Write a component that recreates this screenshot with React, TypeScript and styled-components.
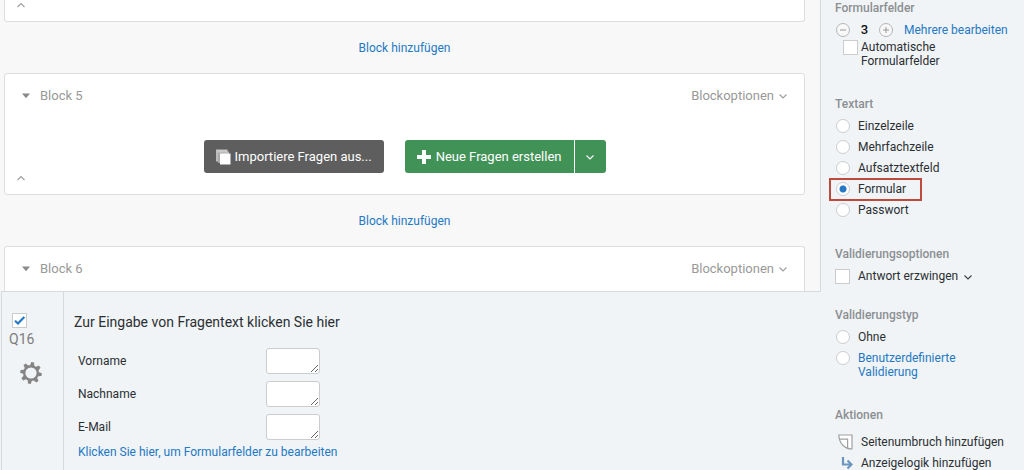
import React from "react";
import styled, { createGlobalStyle, css } from "styled-components";

const blue = "#2478c4";
const line = "#d7dadd";
const panel = "#f0f4f7";

const GlobalStyle = createGlobalStyle`
  *, *::before, *::after { box-sizing: border-box; }
  body { margin: 0; background: ${panel}; }
  body, button, input, textarea {
    font-family: Roboto, "Liberation Sans", sans-serif;
    font-size: 12px;
    line-height: 14px;
    color: #2c2f32;
  }
`;

const Shell = styled.div`
  display: flex;
  height: 100vh;
  overflow: hidden;
`;

const Editor = styled.main`
  flex: 1;
  min-width: 0;
  display: flex;
  flex-direction: column;
`;

const Canvas = styled.div`
  background: #f8f8f8;
  border-right: 1px solid ${line};
`;

const Block = styled.section<{ $cut?: "top" | "bottom" }>`
  margin: 0 15px 0 4px;
  background: #fff;
  border: 1px solid #dedede;
  border-radius: 3px;
  ${(p) => p.$cut === "top" && css`border-top: 0; border-top-left-radius: 0; border-top-right-radius: 0;`}
  ${(p) => p.$cut === "bottom" && css`border-bottom: 0; border-bottom-left-radius: 0; border-bottom-right-radius: 0;`}
`;

const BlockHeader = styled.header`
  display: flex;
  align-items: center;
  justify-content: space-between;
  height: 44px;
  padding: 0 16px;
`;

const PlainButton = styled.button`
  display: inline-flex;
  align-items: center;
  padding: 0;
  border: 0;
  background: none;
  cursor: pointer;
`;

const HeaderButton = styled(PlainButton)<{ $gap: number }>`
  gap: ${(p) => p.$gap}px;
  font-size: 13px;
  color: #999;
`;

const BlockActions = styled.div`
  display: flex;
  justify-content: center;
  gap: 21px;
  padding-top: 22px;
`;

const BlockFooter = styled.footer`
  display: flex;
  align-items: flex-start;
  height: 21px;
  padding: 0 11px;
`;

const ActionButton = styled.button<{ $tone: "grey" | "green" }>`
  display: inline-flex;
  align-items: center;
  gap: 4px;
  height: 33px;
  padding: 0 12px 0 11px;
  border: 0;
  border-radius: 3px;
  background: ${(p) => (p.$tone === "grey" ? "#5e5e5e" : "#419257")};
  color: #fff;
  font-size: 13px;
  white-space: nowrap;
  cursor: pointer;
`;

const SplitButton = styled.div`
  display: flex;
  gap: 1px;
  ${ActionButton}:first-child { border-radius: 3px 0 0 3px; }
  ${ActionButton}:last-child { padding: 0 11px 0 10px; border-radius: 0 3px 3px 0; }
`;

const AddRow = styled.div`
  display: flex;
  align-items: center;
  justify-content: center;
  height: 51px;
  padding-right: 11px;
`;

const Link = styled.a`
  color: ${blue};
  text-decoration: none;
`;

const Question = styled.section`
  flex: 1;
  display: flex;
  margin-left: 1px;
  border-top: 1px solid ${line};
  border-left: 1px solid ${line};
  background: ${panel};
`;

const QuestionRail = styled.div`
  display: flex;
  flex-direction: column;
  width: 62px;
  padding: 21px 0 0 7px;
  border-right: 1px solid ${line};
`;

const QuestionId = styled.span`
  margin-top: 3px;
  font-size: 14px;
  line-height: 16px;
  color: #7d7d7d;
`;

const GearButton = styled(PlainButton)`
  margin: 15px 0 0 11px;
`;

const QuestionBody = styled.div`
  padding: 22px 0 0 10px;
`;

const QuestionTitle = styled.h2`
  margin: 0 0 14px;
  font-size: 14px;
  line-height: 16px;
  font-weight: 400;
`;

const FieldRow = styled.div`
  display: flex;
  align-items: center;
  height: 33px;
  padding-left: 4px;
  label { width: 188px; }
`;

const FieldBox = styled.textarea`
  width: 54px;
  height: 26px;
  border: 1px solid #ccc;
  border-radius: 3px;
  background: #fff;
  overflow: hidden;
`;

const EditFields = styled.div`
  padding: 2px 0 0 4px;
`;

const Sidebar = styled.aside`
  flex: none;
  width: 203px;
  padding-left: 14px;
  background: ${panel};
`;

const Group = styled.section<{ $after: number }>`
  display: flex;
  flex-direction: column;
  align-items: flex-start;
  margin-bottom: ${(p) => p.$after}px;
`;

const GroupTitle = styled.h3`
  margin: 0 0 4px;
  font-size: 12px;
  line-height: 16px;
  font-weight: 500;
  color: #8c8f92;
`;

const Option = styled.label<{ $marked?: boolean }>`
  position: relative;
  display: inline-flex;
  align-items: flex-start;
  gap: 8px;
  padding: 3px 0 4px;
  ${(p) => p.$marked && css`
    &::after {
      content: "";
      position: absolute;
      inset: -1px -16px -1px -6px;
      border: 2px solid #bd4a3a;
    }
  `}
`;

const NestedOption = styled(Option)`
  gap: 3px;
  padding: 0 0 0 8px;
`;

const Radio = styled.input.attrs({ type: "radio" })`
  appearance: none;
  flex: none;
  width: 14px;
  height: 14px;
  margin: 0 0 0 1px;
  border: 1px solid #ccc;
  border-radius: 50%;
  background: #fff;
  &:checked { background: radial-gradient(circle, ${blue} 3px, #fff 4px); }
`;

const Tick = styled.input.attrs({ type: "checkbox" })`
  appearance: none;
  flex: none;
  width: 15px;
  height: 15px;
  margin: 0;
  border: 1px solid #ccc;
  background: #fff;
`;

const TickWrap = styled.span`
  position: relative;
  display: flex;
  width: 15px;
  margin-left: 3px;
  svg { position: absolute; left: 1px; top: 1px; pointer-events: none; }
`;

const InlineRow = styled.div`
  display: flex;
  align-items: center;
  gap: 5px;
`;

const Counter = styled.div`
  display: flex;
  align-items: center;
  height: 20px;
  padding-left: 1px;
  output {
    width: 29px;
    text-align: center;
    font-size: 13px;
    font-weight: 500;
    color: #111;
  }
  a { margin-left: 11px; }
`;

const RoundButton = styled(PlainButton)`
  justify-content: center;
  width: 14px;
  height: 14px;
  border: 1px solid #b5b5b5;
  border-radius: 50%;
  background: #f8f8f8;
`;

const ActionList = styled.div`
  display: flex;
  flex-direction: column;
  align-items: flex-start;
  padding-top: 4px;
`;

const SideAction = styled(PlainButton)`
  gap: 8px;
  height: 21px;
  padding-left: 3px;
`;

const Chevron = ({ up = false, color }: { up?: boolean; color: string }) => (
  <svg width="10" height="10" viewBox="0 0 10 10" fill="none" stroke={color} strokeWidth="1.2">
    <path d={up ? "M1.5 7 5 3.5 8.5 7" : "M1.5 3.5 5 7 8.5 3.5"} />
  </svg>
);

const Triangle = () => (
  <svg width="10" height="6" viewBox="0 0 10 6"><path d="M1 0.5H9L5 5.2Z" fill="#8a8a8a" /></svg>
);

const StackIcon = () => (
  <svg width="16" height="16" viewBox="0 0 16 16">
    <path d="M1 1H12.5V3H3V12.5H1Z" fill="#bdbdbd" />
    <path d="M3 3H14V5H5V14H3Z" fill="#a9a9a9" />
    <path d="M1 1H12.5M3 3H14" stroke="#dcdcdc" strokeWidth=".8" />
    <path d="M5 4.5H15.5V15.5H5Z" fill="#fff" />
  </svg>
);

const PlusIcon = () => (
  <svg width="16" height="16" viewBox="0 0 16 16">
    <path d="M6 1H10V6H15V10H10V15H6V10H1V6H6Z" fill="#fff" />
  </svg>
);

const GearIcon = () => (
  <svg width="22" height="22" viewBox="-11 -11 22 22" fill="#858585">
    <circle r="6.8" fill="none" stroke="#858585" strokeWidth="2.4" />
    {[9, 54, 99, 144, 189, 234, 279, 324].map((a) => (
      <path key={a} d="M-2.2 -7L-1.4 -10.8H1.4L2.2 -7Z" transform={`rotate(${a})`} />
    ))}
  </svg>
);

const PageIcon = () => (
  <svg width="15" height="16" viewBox="0 0 15 16" fill="#fff" stroke="#a0a0a0" strokeWidth="1.2">
    <path d="M.8 1H14V15C6.5 15 1 9 .8 1Z" />
    <path d="M1.2 5.2H9.6V14" fill="none" />
  </svg>
);

const LogicIcon = () => (
  <svg width="15" height="14" viewBox="0 0 15 14" fill="none" stroke="#6d96be" strokeWidth="2.2">
    <path d="M5 1V8.5H13M9.5 4.5 13.5 8.5 9.5 12.5" />
  </svg>
);

const CheckMark = () => (
  <svg width="13" height="13" viewBox="0 0 13 13" fill="none" stroke={blue} strokeWidth="2.2">
    <path d="M2 6.8 5 9.5 11.3 3" />
  </svg>
);

const BlockTop = ({ name }: { name: string }) => (
  <BlockHeader>
    <HeaderButton $gap={9}><Triangle />{name}</HeaderButton>
    <HeaderButton $gap={4}>Blockoptionen<Chevron color="#a0a0a0" /></HeaderButton>
  </BlockHeader>
);

const BlockBottom = () => (
  <BlockFooter>
    <PlainButton aria-label="Block einklappen"><Chevron up color="#a0a0a0" /></PlainButton>
  </BlockFooter>
);

const AddBlock = () => <AddRow><Link href="#add">Block hinzufügen</Link></AddRow>;

const textTypes = ["Einzelzeile", "Mehrfachzeile", "Aufsatztextfeld", "Formular", "Passwort"];
const fields = ["Vorname", "Nachname", "E-Mail"];

export default function App() {
  return (
    <>
      <GlobalStyle />
      <Shell>
        <Editor>
          <Canvas>
            <Block $cut="top"><BlockBottom /></Block>
            <AddBlock />
            <Block>
              <BlockTop name="Block 5" />
              <BlockActions>
                <ActionButton $tone="grey"><StackIcon />Importiere Fragen aus...</ActionButton>
                <SplitButton>
                  <ActionButton $tone="green"><PlusIcon />Neue Fragen erstellen</ActionButton>
                  <ActionButton $tone="green" aria-label="Weitere Optionen"><Chevron color="#fff" /></ActionButton>
                </SplitButton>
              </BlockActions>
              <BlockBottom />
            </Block>
            <AddBlock />
            <Block $cut="bottom"><BlockTop name="Block 6" /></Block>
          </Canvas>
          <Question>
            <QuestionRail>
              <TickWrap>
                <Tick defaultChecked aria-label="Q16" />
                <CheckMark />
              </TickWrap>
              <QuestionId>Q16</QuestionId>
              <GearButton aria-label="Frageoptionen"><GearIcon /></GearButton>
            </QuestionRail>
            <QuestionBody>
              <QuestionTitle>Zur Eingabe von Fragentext klicken Sie hier</QuestionTitle>
              {fields.map((f) => (
                <FieldRow key={f}>
                  <label htmlFor={f}>{f}</label>
                  <FieldBox id={f} />
                </FieldRow>
              ))}
              <EditFields><Link href="#fields">Klicken Sie hier, um Formularfelder zu bearbeiten</Link></EditFields>
            </QuestionBody>
          </Question>
        </Editor>
        <Sidebar>
          <Group $after={28}>
            <GroupTitle>Formularfelder</GroupTitle>
            <Counter>
              <RoundButton aria-label="Weniger">
                <svg width="8" height="8" viewBox="0 0 8 8" stroke="#999"><path d="M1 4H7" /></svg>
              </RoundButton>
              <output>3</output>
              <RoundButton aria-label="Mehr">
                <svg width="8" height="8" viewBox="0 0 8 8" stroke="#999"><path d="M1 4H7M4 1V7" /></svg>
              </RoundButton>
              <Link href="#edit">Mehrere bearbeiten</Link>
            </Counter>
            <NestedOption><Tick /><span>Automatische<br />Formularfelder</span></NestedOption>
          </Group>
          <Group $after={25}>
            <GroupTitle>Textart</GroupTitle>
            {textTypes.map((t) => (
              <Option key={t} $marked={t === "Formular"}>
                <Radio name="textart" defaultChecked={t === "Formular"} />{t}
              </Option>
            ))}
          </Group>
          <Group $after={19}>
            <GroupTitle>Validierungsoptionen</GroupTitle>
            <InlineRow>
              <Option><Tick />Antwort erzwingen</Option>
              <PlainButton aria-label="Optionen"><Chevron color="#404448" /></PlainButton>
            </InlineRow>
          </Group>
          <Group $after={24}>
            <GroupTitle>Validierungstyp</GroupTitle>
            <Option><Radio name="typ" />Ohne</Option>
            <Option><Radio name="typ" /><Link as="span">Benutzerdefinierte<br />Validierung</Link></Option>
          </Group>
          <Group $after={0}>
            <GroupTitle>Aktionen</GroupTitle>
            <ActionList>
              <SideAction><PageIcon />Seitenumbruch hinzufügen</SideAction>
              <SideAction><LogicIcon />Anzeigelogik hinzufügen</SideAction>
            </ActionList>
          </Group>
        </Sidebar>
      </Shell>
    </>
  );
}
